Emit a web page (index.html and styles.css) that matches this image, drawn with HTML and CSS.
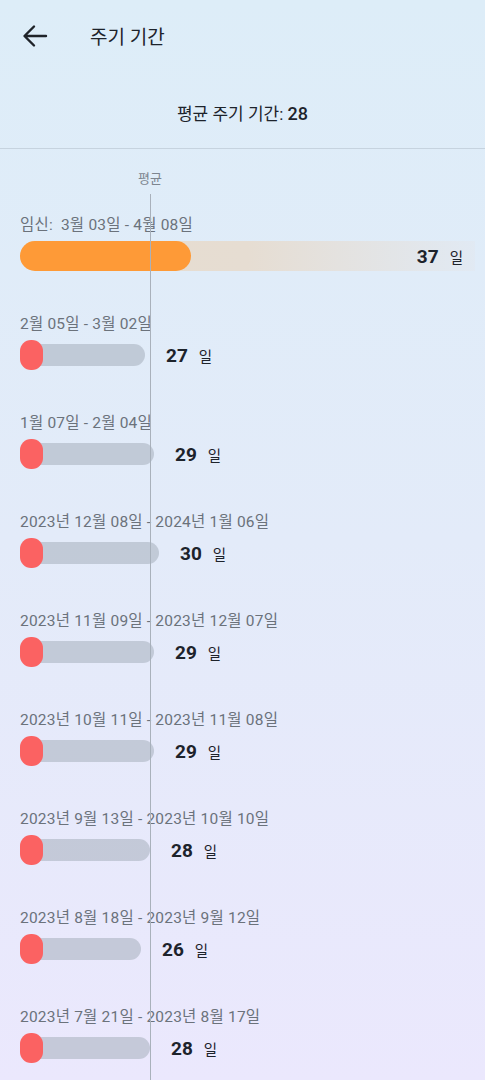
FILE: index.html
```html
<!DOCTYPE html>
<html lang="ko">
<head>
<meta charset="utf-8">
<link rel="stylesheet" href="styles.css">
</head>
<body>
<div class="page">
  <header class="topbar">
    <svg class="back" width="26" height="24" viewBox="0 0 26 24"><path d="M24 12H3M12 2.5L2.5 12L12 21.5" fill="none" stroke="#1f2329" stroke-width="2.4" stroke-linecap="round" stroke-linejoin="round"/></svg>
    <h1 class="title">주기 기간</h1>
  </header>
  <div class="summary">평균 주기 기간: <span class="num">28</span></div>
  <section class="chart">
    <div class="avg-line"></div>
    <div class="avg-label">평균</div>
    <div class="row">
      <div class="label">임신:&nbsp;&nbsp;3월 03일 - 4월 08일</div>
      <div class="bar-row pregnant">
        <div class="fill" style="width:171px"></div>
        <div class="value"><b>37</b><span>일</span></div>
      </div>
    </div>
    <div class="row">
      <div class="label">2월 05일 - 3월 02일</div>
      <div class="bar-row"><div class="track" style="width:125px"><i class="dot"></i></div><div class="value"><b>27</b><span>일</span></div></div>
    </div>
    <div class="row">
      <div class="label">1월 07일 - 2월 04일</div>
      <div class="bar-row"><div class="track" style="width:134px"><i class="dot"></i></div><div class="value"><b>29</b><span>일</span></div></div>
    </div>
    <div class="row">
      <div class="label">2023년 12월 08일 - 2024년 1월 06일</div>
      <div class="bar-row"><div class="track" style="width:139px"><i class="dot"></i></div><div class="value"><b>30</b><span>일</span></div></div>
    </div>
    <div class="row">
      <div class="label">2023년 11월 09일 - 2023년 12월 07일</div>
      <div class="bar-row"><div class="track" style="width:134px"><i class="dot"></i></div><div class="value"><b>29</b><span>일</span></div></div>
    </div>
    <div class="row">
      <div class="label">2023년 10월 11일 - 2023년 11월 08일</div>
      <div class="bar-row"><div class="track" style="width:134px"><i class="dot"></i></div><div class="value"><b>29</b><span>일</span></div></div>
    </div>
    <div class="row">
      <div class="label">2023년 9월 13일 - 2023년 10월 10일</div>
      <div class="bar-row"><div class="track" style="width:130px"><i class="dot"></i></div><div class="value"><b>28</b><span>일</span></div></div>
    </div>
    <div class="row">
      <div class="label">2023년 8월 18일 - 2023년 9월 12일</div>
      <div class="bar-row"><div class="track" style="width:121px"><i class="dot"></i></div><div class="value"><b>26</b><span>일</span></div></div>
    </div>
    <div class="row">
      <div class="label">2023년 7월 21일 - 2023년 8월 17일</div>
      <div class="bar-row"><div class="track" style="width:130px"><i class="dot"></i></div><div class="value"><b>28</b><span>일</span></div></div>
    </div>
  </section>
</div>
</body>
</html>
```
FILE: styles.css
```css
* { box-sizing: border-box; margin: 0; padding: 0; }
html, body { height: 100%; }
body {
  font-family: Roboto, "Noto Sans CJK KR", sans-serif;
  background: linear-gradient(180deg, #ddedf8 0%, #e3ebf9 50%, #ebe8fd 100%);
  color: #1d232b;
  overflow: hidden;
}
.page { width: 485px; height: 1080px; }
.topbar {
  height: 70px;
  display: flex;
  align-items: center;
  padding-left: 22px;
}
.back { display: block; margin-top: 1px; }
.title {
  margin-left: 42px;
  font-size: 19px;
  font-weight: 400;
  color: #1d232b;
}
.summary {
  height: 79px;
  border-bottom: 1px solid #c6d3df;
  text-align: center;
  font-size: 17px;
  font-weight: 400;
  line-height: 20px;
  padding-top: 34px;
  color: #1d232b;
}
.summary .num { font-weight: 500; font-size: 18px; }
.chart {
  position: relative;
  padding-top: 22px;
  height: 931px;
}
.avg-line {
  position: absolute;
  left: 150px;
  top: 45px;
  bottom: 0;
  width: 1px;
  background: #a9b1bb;
}
.avg-label {
  font-size: 13px;
  line-height: 16px;
  color: #7d858f;
  padding-left: 138px;
  margin-bottom: 28px;
}
.row {
  height: 99px;
  padding-left: 20px;
}
.label {
  font-size: 15.5px;
  letter-spacing: 0.2px;
  line-height: 20px;
  color: #6b727b;
  white-space: nowrap;
  margin-bottom: 6px;
}
.bar-row {
  height: 30px;
  display: flex;
  align-items: center;
}
.track {
  height: 22px;
  border-radius: 11px;
  background: rgba(165, 174, 188, 0.55);
  position: relative;
}
.dot {
  position: absolute;
  left: 0;
  top: -4px;
  width: 23px;
  height: 30px;
  border-radius: 11px;
  background: #fb6262;
}
.value {
  margin-left: 21px;
  display: flex;
  align-items: baseline;
}
.value b {
  font-size: 19px;
  font-weight: 700;
  color: #1d232b;
}
.value span {
  margin-left: 11px;
  font-size: 14.5px;
  color: #1d232b;
}
.pregnant {
  width: 455px;
  background: linear-gradient(90deg, #e6dccf 0%, #e6ddd2 50%, rgba(226, 232, 240, 0.6) 100%);
  border-radius: 15px 0 0 15px;
}
.pregnant .fill {
  height: 30px;
  border-radius: 15px;
  background: #fe9a37;
}
.pregnant .value { margin-left: auto; margin-right: 12px; }
```
